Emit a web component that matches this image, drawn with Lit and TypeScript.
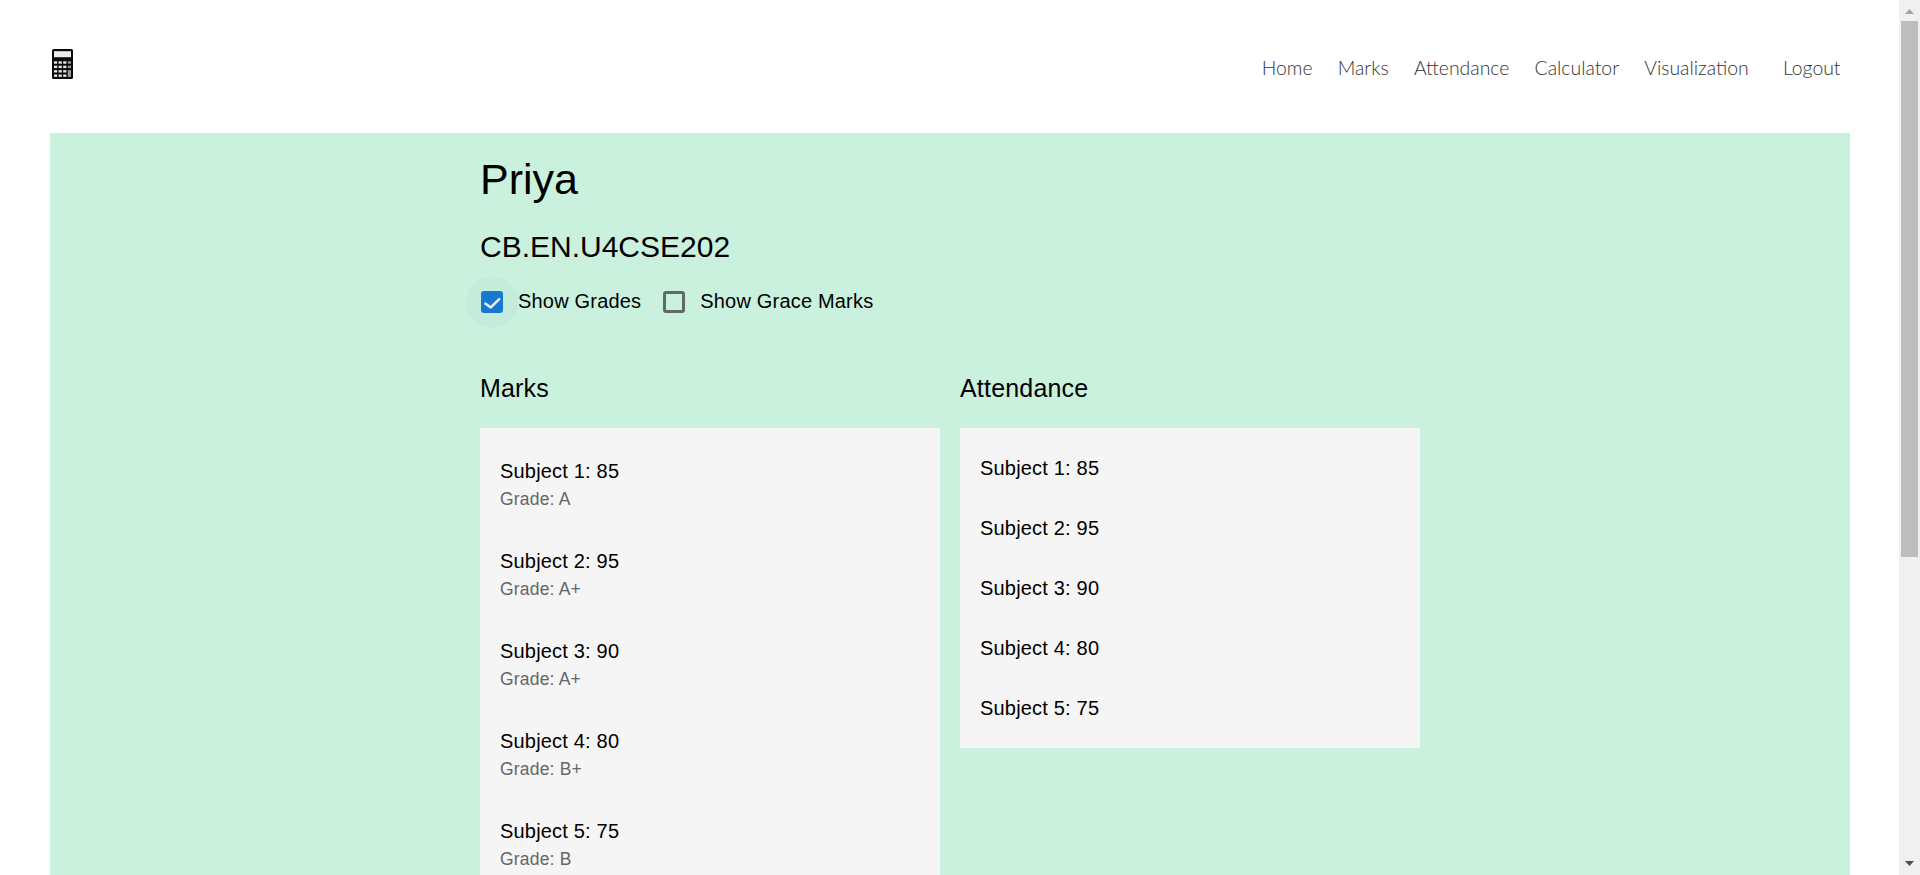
import { LitElement, html, css, svg } from "lit";
import { customElement, state } from "lit/decorators.js";

const MARKS = [
  { name: "Subject 1", mark: 85, grade: "A" },
  { name: "Subject 2", mark: 95, grade: "A+" },
  { name: "Subject 3", mark: 90, grade: "A+" },
  { name: "Subject 4", mark: 80, grade: "B+" },
  { name: "Subject 5", mark: 75, grade: "B" },
];

const NAV = ["Home", "Marks", "Attendance", "Calculator", "Visualization"];

const calculatorIcon = () => {
  const keys = [];
  for (let r = 0; r < 4; r++) {
    for (let c = 0; c < 4; c++) {
      if (c === 3 && r === 3) continue;
      const tall = c === 3 && r === 2;
      keys.push(
        svg`<rect x=${2 + c * 4.6} y=${12.3 + r * 4.4} width="3.2" height=${tall ? 6.8 : 2.4} fill=${c === 3 ? "#999" : "#e4e4e4"} />`
      );
    }
  }
  return html`<svg class="logo" width="21" height="30" viewBox="0 0 21 30">
    <rect width="21" height="30" rx="1.5" fill="#0a0a0a" />
    <rect x="2" y="2.2" width="17" height="6" fill="#eee" />
    ${keys}
  </svg>`;
};

@customElement("app-root")
export class AppRoot extends LitElement {
  static styles = css`
    :host {
      display: block;
      padding-right: 21px;
      font-family: "Liberation Sans", Arial, sans-serif;
      color: #000;
    }
    .nav {
      display: flex;
      align-items: flex-start;
      justify-content: space-between;
      height: 133.33px;
      padding: 49px 58.5px 0 52px;
      box-sizing: border-box;
    }
    .logo {
      display: block;
    }
    .links {
      display: flex;
      gap: 25.2px;
      padding-top: 5px;
      font-family: Lato, sans-serif;
      font-weight: 300;
      font-size: 19.4px;
      line-height: 28px;
      color: #333;
    }
    .links .logout {
      margin-left: 9px;
    }
    .main {
      margin: 0 49px 0 50px;
      background: #caf1de;
      padding: 0 430px 440px;
    }
    h1 {
      margin: 0;
      padding-top: 20px;
      font-size: 43px;
      font-weight: 400;
      line-height: 52px;
    }
    h2 {
      margin: 24px 0 0;
      font-size: 30px;
      font-weight: 400;
      line-height: 35px;
    }
    .checks {
      display: flex;
      align-items: center;
      margin-top: 11.5px;
      height: 52px;
      font-size: 20px;
      letter-spacing: 0.19px;
    }
    .check {
      display: flex;
      align-items: center;
      gap: 15px;
      margin-right: 21px;
    }
    .box {
      position: relative;
      width: 22px;
      height: 22px;
      margin-left: 1px;
      box-sizing: border-box;
      border-radius: 3px;
      border: 3px solid #5f6b66;
    }
    .box.on {
      background: #1976d2;
      border: none;
    }
    .box.on::before {
      content: "";
      position: absolute;
      inset: -15px;
      border-radius: 50%;
      background: rgba(25, 118, 210, 0.04);
    }
    .box svg {
      position: absolute;
      inset: 0;
    }
    .columns {
      display: grid;
      grid-template-columns: 460px 460px;
      gap: 20px;
      margin-top: 46px;
      align-items: start;
    }
    h3 {
      margin: 0;
      font-size: 25px;
      font-weight: 400;
      line-height: 29px;
      letter-spacing: 0.19px;
    }
    .card {
      margin-top: 25.5px;
      background: #f5f5f5;
      padding: 10px 0;
    }
    .item {
      padding: 17.5px 20px;
    }
    .att .item {
      padding: 15px 20px;
    }
    .label {
      font-size: 20px;
      line-height: 30px;
      letter-spacing: 0.19px;
    }
    .grade {
      padding-top: 1px;
      margin-bottom: -1px;
      font-size: 17.5px;
      line-height: 25px;
      letter-spacing: 0.19px;
      color: #666;
    }
    .scrollbar {
      position: fixed;
      top: 0;
      right: 0;
      bottom: 0;
      width: 21px;
      background: #f0f0f0;
    }
    .thumb {
      position: absolute;
      top: 21px;
      left: 2px;
      width: 17px;
      height: 536px;
      background: #bdbdbd;
    }
    .arrow {
      position: absolute;
      left: 6px;
    }
    .arrow.up {
      top: 9px;
    }
    .arrow.down {
      bottom: 9px;
    }
  `;

  @state() showGrades = true;
  @state() showGrace = false;

  render() {
    return html`
      <div class="nav">
        ${calculatorIcon()}
        <div class="links">
          ${NAV.map((n) => html`<span>${n}</span>`)}
          <span class="logout">Logout</span>
        </div>
      </div>
      <div class="main">
        <h1>Priya</h1>
        <h2>CB.EN.U4CSE202</h2>
        <div class="checks">
          <div class="check">
            <span class="box on">
              <svg viewBox="0 0 22 22" width="22" height="22">
                <path d="M3.5 12l6.2 4.3 9.3-9" fill="none" stroke="#e6f1fa" stroke-width="2.5" />
              </svg>
            </span>
            Show Grades
          </div>
          <div class="check"><span class="box"></span> Show Grace Marks</div>
        </div>
        <div class="columns">
          <div>
            <h3>Marks</h3>
            <div class="card">
              ${MARKS.map(
                (m) => html`<div class="item">
                  <div class="label">${m.name}: ${m.mark}</div>
                  <div class="grade">Grade: ${m.grade}</div>
                </div>`
              )}
            </div>
          </div>
          <div>
            <h3>Attendance</h3>
            <div class="card att">
              ${MARKS.map(
                (m) => html`<div class="item"><div class="label">${m.name}: ${m.mark}</div></div>`
              )}
            </div>
          </div>
        </div>
      </div>
      <div class="scrollbar">
        <svg class="arrow up" width="9" height="5" viewBox="0 0 9 5"><path d="M4.5 0L9 5H0z" fill="#a3a3a3" /></svg>
        <div class="thumb"></div>
        <svg class="arrow down" width="9" height="5" viewBox="0 0 9 5"><path d="M0 0h9L4.5 5z" fill="#505050" /></svg>
      </div>
    `;
  }
}
